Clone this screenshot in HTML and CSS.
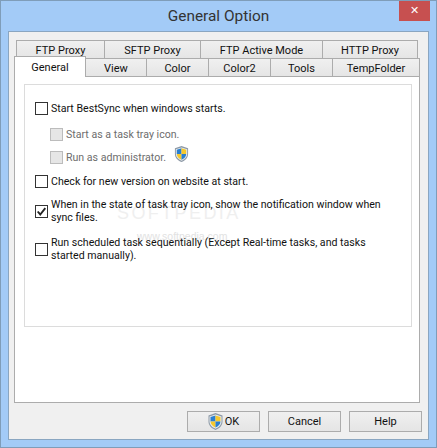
FILE: index.html
```html
<!DOCTYPE html>
<html>
<head>
    <meta charset="utf-8" />
    <title>General Option</title>
    <link rel="stylesheet" href="styles.css">
</head>
<body>
<svg width="0" height="0" class="defs">
    <symbol id="shield" viewBox="1 .5 14 17">
        <path d="M8 .5 15 3v6c0 4-3 7-7 8.500C4 16 1 13 1 9V3z" fill="#8d99a6"/>
        <path d="M8 2 14 4v5c0 3.200-2.600 5.800-6 7.200C4.600 14.800 2 12.200 2 9V4z" fill="#e8edf1"/>
        <path d="M8 3 8 9H3V4.600z" fill="#2a7fd0"/>
        <path d="M8 3l5 1.600V9H8z" fill="#f7c92c"/>
        <path d="M3 9h5v6C5.200 13.800 3 11.800 3 9z" fill="#f7c92c"/>
        <path d="M13 9H8v6c2.800-1.200 5-3.200 5-6z" fill="#2a7fd0"/>
    </symbol>
</svg>
<div class="window">
    <div class="titlebar">
        <span class="title">General Option</span>
        <span class="close">&#10005;</span>
    </div>
    <div class="client">
        <div class="tabs">
            <div class="tab-row upper">
                <span class="tab t-ftp">FTP Proxy</span>
                <span class="tab t-sftp">SFTP Proxy</span>
                <span class="tab t-active">FTP Active Mode</span>
                <span class="tab t-http">HTTP Proxy</span>
            </div>
            <div class="tab-row lower">
                <span class="tab selected">General</span>
                <span class="tab t-view">View</span>
                <span class="tab t-color">Color</span>
                <span class="tab t-color">Color2</span>
                <span class="tab t-color">Tools</span>
                <span class="tab t-temp">TempFolder</span>
            </div>
        </div>
        <div class="panel">
            <div class="group">
                <span class="mark">SOFTPEDIA</span>
                <span class="mark-url">www.softpedia.com</span>
                <div class="opt first"><span class="check"></span><span>Start BestSync when windows starts.</span></div>
                <div class="opt sub sub-a"><span class="check off"></span><span>Start as a task tray icon.</span></div>
                <div class="opt sub sub-b"><span class="check off"></span><span>Run as administrator.</span><svg class="shield-sm"><use href="#shield"/></svg></div>
                <div class="opt check-ver"><span class="check"></span><span>Check for new version on website at start.</span></div>
                <div class="opt tray"><span class="check"><svg viewBox="0 0 13 13" width="11" height="11"><path d="M2 6.500 5 10 11 2.500" fill="none" stroke="#222" stroke-width="2.200"/></svg></span><span>When in the state of task tray icon, show the notification window when sync files.</span></div>
                <div class="opt sched"><span class="check"></span><span>Run scheduled task sequentially (Except Real-time tasks, and tasks started manually).</span></div>
            </div>
        </div>
        <div class="buttons">
            <button class="btn"><svg class="shield-btn"><use href="#shield"/></svg>OK</button>
            <button class="btn">Cancel</button>
            <button class="btn">Help</button>
        </div>
    </div>
</div>
</body>
</html>
```

FILE: styles.css
```css
html, body {
    margin: 0;
    padding: 0;
}
body {
    width: 437px;
    height: 448px;
    overflow: hidden;
    font-family: 'Roboto', 'Liberation Sans', Arial, sans-serif;
    font-size: 11px;
    color: #111;
}
.defs {
    display: block;
    height: 0;
}
.window {
    box-sizing: border-box;
    width: 437px;
    height: 448px;
    padding: 0 7px 7px;
    background: #a3cbf7;
    border: 1px solid #7f9db9;
}
.titlebar {
    height: 30px;
    display: flex;
    justify-content: center;
    align-items: center;
    position: relative;
}
.title {
    font-size: 15.4px;
    color: #333;
}
.close {
    position: absolute;
    top: 0;
    right: -1px;
    width: 31px;
    height: 20px;
    background: #c75050;
    color: #fff;
    font-family: 'DejaVu Sans', sans-serif;
    font-size: 11px;
    font-weight: bold;
    text-align: center;
    line-height: 20px;
}
.client {
    height: 409px;
    background: #f0f0f0;
    border: 1px solid #8aa6c1;
    box-sizing: border-box;
    padding: 8px 8px 0 5px;
}

/* tabs */
.tab-row {
    display: flex;
}
.upper {
    padding-left: 2px;
    height: 18px;
}
.lower {
    height: 18px;
}
.tab {
    box-sizing: border-box;
    display: flex;
    align-items: center;
    justify-content: center;
    height: 18px;
    padding-top: 1px;
    background: linear-gradient(#f0f0f0, #e5e5e5);
    border: 1px solid #acacac;
    border-left: 0;
    border-bottom: 0;
}
.t-ftp { width: 89px; border-left: 1px solid #acacac; }
.t-sftp { width: 96px; }
.t-active { width: 122px; }
.t-http { width: 95px; }
.t-view { width: 61px; }
.t-color { width: 62px; }
.t-temp { width: 87px; }
.tab.selected {
    width: 72px;
    height: 21px;
    margin-top: -2px;
    padding-top: 0;
    background: #fff;
    border-left: 1px solid #acacac;
    position: relative;
    z-index: 1;
}

/* panel */
.panel {
    box-sizing: border-box;
    width: 406px;
    height: 327px;
    padding: 7px 7px 0 9px;
    background: #fff;
    border: 1px solid #acacac;
}
.group {
    box-sizing: border-box;
    height: 243px;
    border: 1px solid #dcdcdc;
    padding: 17px 20px 0 10px;
    position: relative;
}
/* faint site watermark over the options */
.mark, .mark-url {
    position: absolute;
    font-family: 'Liberation Sans', Arial, sans-serif;
    white-space: nowrap;
}
.mark {
    top: 118px;
    left: 92px;
    font-size: 18px;
    letter-spacing: 2.4px;
    color: #efefef;
}
.mark-url {
    top: 145px;
    left: 112px;
    font-size: 10.5px;
    color: #e2e2e2;
}
.opt {
    display: flex;
    align-items: center;
    gap: 3px;
    font-size: 10.6px;
    line-height: 13px;
    position: relative;
}
.sub {
    padding-left: 15px;
    color: #6d6d6d;
}
.sub-a { margin-top: 13px; }
.sub-b { margin-top: 10px; }
.check-ver { margin-top: 11px; }
.tray { margin-top: 10px; }
.sched { margin-top: 12px; }
.check {
    flex: none;
    box-sizing: border-box;
    width: 13px;
    height: 13px;
    background: #fff;
    border: 1px solid #333;
    display: flex;
    align-items: center;
    justify-content: center;
}
.check.off {
    background: #e6e6e6;
    border-color: #bcbcbc;
}
.shield-sm {
    width: 15px;
    height: 16px;
    margin: -7px 0 0 5px;
}

/* bottom buttons */
.buttons {
    display: flex;
    justify-content: flex-end;
    gap: 8px;
    margin-right: -2px;
    padding: 8px 0 0;
}
.btn {
    box-sizing: border-box;
    width: 73px;
    height: 21px;
    padding: 0;
    display: flex;
    align-items: center;
    justify-content: center;
    gap: 2px;
    font: inherit;
    color: #111;
    background: linear-gradient(#f0f0f0, #e5e5e5);
    border: 1px solid #acacac;
}
.shield-btn {
    width: 15px;
    height: 17px;
}
```
